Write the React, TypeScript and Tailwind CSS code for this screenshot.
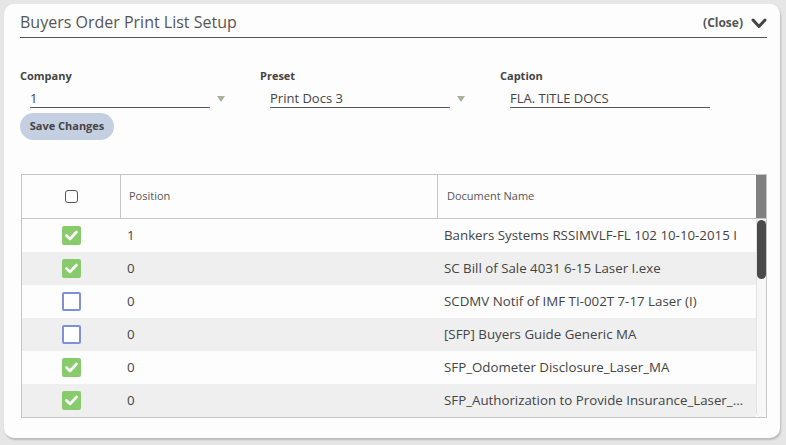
import React from 'react'

const rows = [
  { checked: true, position: '1', name: 'Bankers Systems RSSIMVLF-FL 102 10-10-2015 I' },
  { checked: true, position: '0', name: 'SC Bill of Sale 4031 6-15 Laser I.exe' },
  { checked: false, position: '0', name: 'SCDMV Notif of IMF TI-002T 7-17 Laser (I)' },
  { checked: false, position: '0', name: '[SFP] Buyers Guide Generic MA' },
  { checked: true, position: '0', name: 'SFP_Odometer Disclosure_Laser_MA' },
  { checked: true, position: '0', name: 'SFP_Authorization to Provide Insurance_Laser_MA_Final' },
]

function Arrow() {
  return (
    <svg width="8" height="6" viewBox="0 0 8 6" className="ml-[7px] mt-[2px]">
      <path d="M0 0 H8 L4 6 Z" fill="#a9b09c" />
    </svg>
  )
}

function RowCheckbox({ checked }: { checked: boolean }) {
  if (checked) {
    return (
      <div className="w-[19px] h-[19px] rounded-[2px] bg-[#88cb6c] flex items-center justify-center">
        <svg width="13" height="11" viewBox="0 0 13 11">
          <path d="M1.5 5.5 L5 9 L11.5 2" fill="none" stroke="#ffffff" strokeWidth="2.6" strokeLinecap="round" strokeLinejoin="round" />
        </svg>
      </div>
    )
  }
  return <div className="w-[19px] h-[19px] rounded-[2px] border-2 border-[#7f8fd8] bg-white" />
}

export default function App() {
  return (
    <div className="w-[786px] h-[445px] bg-[#e6e6e6] p-[4px] font-['Open_Sans',sans-serif]">
      <div className="w-[776px] h-[434px] rounded-[10px] bg-[#fdfdfd] shadow-[1px_2px_2px_#b9b9b9] pl-[16px] pr-[13px]">
        {/* Header */}
        <div className="h-[34px] pt-[3px] flex items-center justify-between border-b border-[#555]">
          <h1 className="text-[16px] text-[#555]">Buyers Order Print List Setup</h1>
          <div className="flex items-center gap-[8px] mt-[2px]">
            <span className="text-[12px] font-bold text-[#555]">(Close)</span>
            <svg width="16" height="11" viewBox="0 0 16 11">
              <path d="M2 2 L8 8.5 L14 2" fill="none" stroke="#444" strokeWidth="3" strokeLinecap="round" strokeLinejoin="round" />
            </svg>
          </div>
        </div>

        {/* Fields */}
        <div className="mt-[30px] flex">
          <div className="w-[240px]">
            <label className="block text-[11px] leading-[16px] font-bold text-[#444]">Company</label>
            <div className="mt-[4px] flex items-center">
              <div className="ml-[10px] w-[180px] h-[20px] border-b border-[#555] text-[13px] leading-[20px] text-[#444]">1</div>
              <Arrow />
            </div>
          </div>
          <div className="w-[240px]">
            <label className="block text-[11px] leading-[16px] font-bold text-[#444]">Preset</label>
            <div className="mt-[4px] flex items-center">
              <div className="ml-[10px] w-[180px] h-[20px] border-b border-[#555] text-[13px] leading-[20px] text-[#444]">Print Docs 3</div>
              <Arrow />
            </div>
          </div>
          <div className="w-[240px]">
            <label className="block text-[11px] leading-[16px] font-bold text-[#444]">Caption</label>
            <div className="mt-[4px] flex items-center">
              <div className="ml-[10px] w-[200px] h-[20px] border-b border-[#555] text-[13px] leading-[20px] text-[#444]">FLA. TITLE DOCS</div>
            </div>
          </div>
        </div>

        <button className="mt-[5px] w-[94px] h-[27px] rounded-full bg-[#c4cfe1] text-[11px] font-bold text-[#444]">
          Save Changes
        </button>

        {/* Table */}
        <div className="mt-[34px] ml-px w-[746px] h-[244px] border border-[#c6c6c6] flex">
          <div className="flex-1 min-w-0 flex flex-col">
            <div className="h-[44px] flex border-b border-[#c6c6c6] text-[11px] text-[#555]">
              <div className="w-[99px] flex items-center justify-center border-r border-[#c6c6c6]">
                <div className="w-[13px] h-[13px] rounded-[3px] border-[1.5px] border-[#555] bg-white" />
              </div>
              <div className="w-[317px] flex items-center pl-[8px] border-r border-[#c6c6c6]">Position</div>
              <div className="flex-1 flex items-center pl-[9px]">Document Name</div>
            </div>
            {rows.map((row, i) => (
              <div key={i} className={`h-[33px] flex items-center text-[13.3px] text-[#444] ${i % 2 === 1 ? 'bg-[#efefef]' : ''}`}>
                <div className="w-[99px] flex justify-center">
                  <RowCheckbox checked={row.checked} />
                </div>
                <div className="w-[317px] pl-[6px]">{row.position}</div>
                <div className="flex-1 min-w-0 pl-[6px] pr-[8px] truncate">{row.name}</div>
              </div>
            ))}
          </div>
          {/* Scrollbar */}
          <div className="w-[10px] flex flex-col">
            <div className="h-[44px] bg-[#808080] border-b border-[#c6c6c6]" />
            <div className="flex-1 relative bg-[#f7f7f7] rounded-b-full border-l border-[#e2e2e2]">
              <div className="absolute left-0 right-0 top-[1px] h-[59px] rounded-full bg-[#4a4a4a]" />
            </div>
          </div>
        </div>
      </div>
    </div>
  )
}
